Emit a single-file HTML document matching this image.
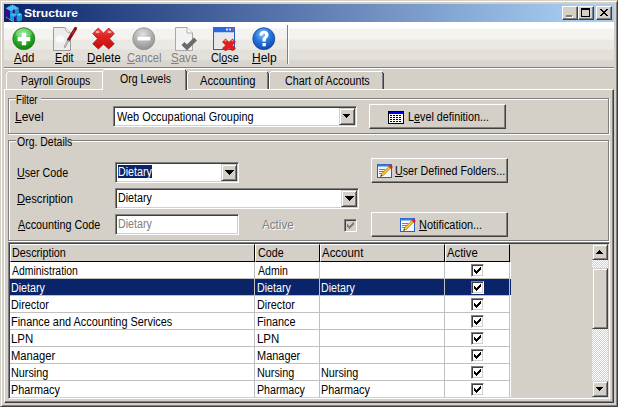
<!DOCTYPE html><html><head><meta charset="utf-8"><style>
*{box-sizing:border-box;margin:0;padding:0}
html,body{width:618px;height:407px;overflow:hidden}
body{position:relative;background:#d4d0c8;font-family:"Liberation Sans",sans-serif;font-size:12px;color:#000}
.a{position:absolute}
.t{position:absolute;white-space:nowrap;line-height:20px;transform-origin:0 0}
u{text-decoration:underline;text-underline-offset:1px;text-decoration-thickness:1px}
.dis{color:#808080;text-shadow:1px 1px 0 #fff}
</style></head><body>
<div class="a" style="left:0px;top:0px;width:618px;height:407px;background:#d4d0c8;border:1px solid;border-color:#d4d0c8 #404040 #404040 #d4d0c8;box-shadow:inset 1px 1px #fff,inset -1px -1px #808080"></div>
<div class="a" style="left:4px;top:4px;width:610px;height:18px;background:linear-gradient(to right,#0a246a 0,#a6caf0 570px);"></div>
<div class="a" style="left:562px;top:6px;width:16px;height:14px;background:#d4d0c8;border:1px solid;border-color:#fff #404040 #404040 #fff;box-shadow:inset -1px -1px #808080"></div>
<div class="a" style="left:578px;top:6px;width:16px;height:14px;background:#d4d0c8;border:1px solid;border-color:#fff #404040 #404040 #fff;box-shadow:inset -1px -1px #808080"></div>
<div class="a" style="left:596px;top:6px;width:16px;height:14px;background:#d4d0c8;border:1px solid;border-color:#fff #404040 #404040 #fff;box-shadow:inset -1px -1px #808080"></div>
<div class="a" style="left:567px;top:16px;width:6px;height:2px;background:#fff;"></div>
<div class="a" style="left:566px;top:15px;width:6px;height:2px;background:#808080;"></div>
<div class="a" style="left:581px;top:8px;width:9px;height:9px;border:1px solid #000;border-top-width:2px"></div>
<svg class="a" style="left:600px;top:9px" width="8" height="7" viewBox="0 0 8 7" shape-rendering="crispEdges"><rect x="0" y="0" width="1" height="1"/><rect x="1" y="0" width="1" height="1"/><rect x="6" y="0" width="1" height="1"/><rect x="7" y="0" width="1" height="1"/><rect x="1" y="1" width="1" height="1"/><rect x="2" y="1" width="1" height="1"/><rect x="5" y="1" width="1" height="1"/><rect x="6" y="1" width="1" height="1"/><rect x="2" y="2" width="1" height="1"/><rect x="3" y="2" width="1" height="1"/><rect x="4" y="2" width="1" height="1"/><rect x="5" y="2" width="1" height="1"/><rect x="3" y="3" width="1" height="1"/><rect x="4" y="3" width="1" height="1"/><rect x="2" y="4" width="1" height="1"/><rect x="3" y="4" width="1" height="1"/><rect x="4" y="4" width="1" height="1"/><rect x="5" y="4" width="1" height="1"/><rect x="1" y="5" width="1" height="1"/><rect x="2" y="5" width="1" height="1"/><rect x="5" y="5" width="1" height="1"/><rect x="6" y="5" width="1" height="1"/><rect x="0" y="6" width="1" height="1"/><rect x="1" y="6" width="1" height="1"/><rect x="6" y="6" width="1" height="1"/><rect x="7" y="6" width="1" height="1"/></svg>
<div class="a" style="left:4px;top:22px;width:610px;height:45px;background:linear-gradient(to bottom,#fff 0,#fff 13%,#f4f3f0 16%,#f4f3f0 38%,#ebe9e4 40%,#ebe9e4 60%,#e3e0da 62%,#e3e0da 84%,#d9d5ce 86%,#d9d5ce 100%);"></div>
<div class="a" style="left:4px;top:67px;width:610px;height:1px;background:#808080;"></div>
<div class="a" style="left:4px;top:68px;width:610px;height:1px;background:#fff;"></div>
<div class="a" style="left:287px;top:25px;width:1px;height:39px;background:#808080;"></div>
<div class="a" style="left:288px;top:25px;width:1px;height:39px;background:#fff;"></div>
<div class="a" style="left:4px;top:89px;width:610px;height:314px;background:#d4d0c8;border:1px solid;border-color:#fff #404040 #404040 #fff;box-shadow:inset -1px -1px #808080"></div>
<div class="a" style="left:6px;top:71px;width:98px;height:18px;background:#d4d0c8;"></div>
<div class="a" style="left:8px;top:71px;width:94px;height:1px;background:#fff;"></div>
<div class="a" style="left:7px;top:72px;width:1px;height:1px;background:#fff;"></div>
<div class="a" style="left:6px;top:73px;width:1px;height:16px;background:#fff;"></div>
<div class="a" style="left:102px;top:72px;width:1px;height:1px;background:#404040;"></div>
<div class="a" style="left:103px;top:73px;width:1px;height:16px;background:#404040;"></div>
<div class="a" style="left:102px;top:73px;width:1px;height:16px;background:#808080;"></div>
<div class="a" style="left:187px;top:71px;width:82px;height:18px;background:#d4d0c8;"></div>
<div class="a" style="left:189px;top:71px;width:78px;height:1px;background:#fff;"></div>
<div class="a" style="left:188px;top:72px;width:1px;height:1px;background:#fff;"></div>
<div class="a" style="left:187px;top:73px;width:1px;height:16px;background:#fff;"></div>
<div class="a" style="left:267px;top:72px;width:1px;height:1px;background:#404040;"></div>
<div class="a" style="left:268px;top:73px;width:1px;height:16px;background:#404040;"></div>
<div class="a" style="left:267px;top:73px;width:1px;height:16px;background:#808080;"></div>
<div class="a" style="left:269px;top:71px;width:115px;height:18px;background:#d4d0c8;"></div>
<div class="a" style="left:271px;top:71px;width:111px;height:1px;background:#fff;"></div>
<div class="a" style="left:270px;top:72px;width:1px;height:1px;background:#fff;"></div>
<div class="a" style="left:269px;top:73px;width:1px;height:16px;background:#fff;"></div>
<div class="a" style="left:382px;top:72px;width:1px;height:1px;background:#404040;"></div>
<div class="a" style="left:383px;top:73px;width:1px;height:16px;background:#404040;"></div>
<div class="a" style="left:382px;top:73px;width:1px;height:16px;background:#808080;"></div>
<div class="a" style="left:102px;top:69px;width:85px;height:21px;background:#d4d0c8;"></div>
<div class="a" style="left:104px;top:69px;width:81px;height:1px;background:#fff;"></div>
<div class="a" style="left:103px;top:70px;width:1px;height:1px;background:#fff;"></div>
<div class="a" style="left:102px;top:71px;width:1px;height:19px;background:#fff;"></div>
<div class="a" style="left:185px;top:70px;width:1px;height:1px;background:#404040;"></div>
<div class="a" style="left:186px;top:71px;width:1px;height:19px;background:#404040;"></div>
<div class="a" style="left:185px;top:71px;width:1px;height:19px;background:#808080;"></div>
<div class="a" style="left:8px;top:98px;width:601px;height:36px;border:1px solid #808080;box-shadow:1px 1px #fff,inset 1px 1px #fff"></div>
<div class="a" style="left:16px;top:96px;width:25px;height:5px;background:#d4d0c8;"></div>
<div class="a" style="left:113px;top:106px;width:244px;height:21px;background:#fff;border:1px solid;border-color:#808080 #fff #fff #808080;box-shadow:inset 1px 1px #404040,inset -1px -1px #d4d0c8"></div>
<div class="a" style="left:339px;top:108px;width:16px;height:17px;background:#d4d0c8;border:1px solid;border-color:#d4d0c8 #404040 #404040 #d4d0c8;box-shadow:inset 1px 1px #fff,inset -1px -1px #808080"></div>
<svg class="a" style="left:343px;top:114px" width="7" height="4" viewBox="0 0 7 4" shape-rendering="crispEdges"><rect x="0" y="0" width="7" height="1"/><rect x="1" y="1" width="5" height="1"/><rect x="2" y="2" width="3" height="1"/><rect x="3" y="3" width="1" height="1"/></svg>
<div class="a" style="left:369px;top:104px;width:137px;height:25px;background:#d4d0c8;border:1px solid;border-color:#fff #404040 #404040 #fff;box-shadow:inset -1px -1px #808080"></div>
<div class="a" style="left:8px;top:140px;width:601px;height:101px;border:1px solid #808080;box-shadow:1px 1px #fff,inset 1px 1px #fff"></div>
<div class="a" style="left:16px;top:138px;width:56px;height:5px;background:#d4d0c8;"></div>
<div class="a" style="left:115px;top:162px;width:124px;height:21px;background:#fff;border:1px solid;border-color:#808080 #fff #fff #808080;box-shadow:inset 1px 1px #404040,inset -1px -1px #d4d0c8"></div>
<div class="a" style="left:118px;top:165px;width:34px;height:13px;background:#0a246a;"></div>
<div class="a" style="left:221px;top:164px;width:16px;height:17px;background:#d4d0c8;border:1px solid;border-color:#d4d0c8 #404040 #404040 #d4d0c8;box-shadow:inset 1px 1px #fff,inset -1px -1px #808080"></div>
<svg class="a" style="left:225px;top:170px" width="9" height="5" viewBox="0 0 9 5" shape-rendering="crispEdges"><rect x="0" y="0" width="9" height="1"/><rect x="1" y="1" width="7" height="1"/><rect x="2" y="2" width="5" height="1"/><rect x="3" y="3" width="3" height="1"/><rect x="4" y="4" width="1" height="1"/></svg>
<div class="a" style="left:115px;top:188px;width:244px;height:21px;background:#fff;border:1px solid;border-color:#808080 #fff #fff #808080;box-shadow:inset 1px 1px #404040,inset -1px -1px #d4d0c8"></div>
<div class="a" style="left:341px;top:190px;width:16px;height:17px;background:#d4d0c8;border:1px solid;border-color:#d4d0c8 #404040 #404040 #d4d0c8;box-shadow:inset 1px 1px #fff,inset -1px -1px #808080"></div>
<svg class="a" style="left:345px;top:196px" width="9" height="5" viewBox="0 0 9 5" shape-rendering="crispEdges"><rect x="0" y="0" width="9" height="1"/><rect x="1" y="1" width="7" height="1"/><rect x="2" y="2" width="5" height="1"/><rect x="3" y="3" width="3" height="1"/><rect x="4" y="4" width="1" height="1"/></svg>
<div class="a" style="left:115px;top:214px;width:124px;height:21px;background:#fff;border:1px solid;border-color:#808080 #fff #fff #808080;box-shadow:inset 1px 1px #404040,inset -1px -1px #d4d0c8"></div>
<div class="a" style="left:344px;top:219px;width:13px;height:13px;background:#d4d0c8;border:1px solid;border-color:#808080 #fff #fff #808080;box-shadow:inset 1px 1px #404040,inset -1px -1px #d4d0c8"></div>
<div class="a" style="left:371px;top:158px;width:137px;height:25px;background:#d4d0c8;border:1px solid;border-color:#fff #404040 #404040 #fff;box-shadow:inset -1px -1px #808080"></div>
<div class="a" style="left:371px;top:212px;width:137px;height:25px;background:#d4d0c8;border:1px solid;border-color:#fff #404040 #404040 #fff;box-shadow:inset -1px -1px #808080"></div>
<div class="a" style="left:8px;top:242px;width:602px;height:157px;background:#d4d0c8;border:1px solid;border-color:#808080 #fff #fff #808080;box-shadow:inset 1px 1px #404040,inset -1px -1px #d4d0c8"></div>
<div class="a" style="left:10px;top:244px;width:245px;height:18px;background:#d4d0c8;border:1px solid;border-color:#fff #000 #000 #fff;box-shadow:none"></div>
<div class="a" style="left:255px;top:244px;width:65px;height:18px;background:#d4d0c8;border:1px solid;border-color:#fff #000 #000 #fff;box-shadow:none"></div>
<div class="a" style="left:320px;top:244px;width:125px;height:18px;background:#d4d0c8;border:1px solid;border-color:#fff #000 #000 #fff;box-shadow:none"></div>
<div class="a" style="left:445px;top:244px;width:65px;height:18px;background:#d4d0c8;border:1px solid;border-color:#fff #000 #000 #fff;box-shadow:none"></div>
<div class="a" style="left:10px;top:262px;width:501px;height:17px;background:#fff;"></div>
<div class="a" style="left:10px;top:279px;width:501px;height:17px;background:#fff;"></div>
<div class="a" style="left:10px;top:296px;width:501px;height:17px;background:#fff;"></div>
<div class="a" style="left:10px;top:313px;width:501px;height:17px;background:#fff;"></div>
<div class="a" style="left:10px;top:330px;width:501px;height:17px;background:#fff;"></div>
<div class="a" style="left:10px;top:347px;width:501px;height:17px;background:#fff;"></div>
<div class="a" style="left:10px;top:364px;width:501px;height:17px;background:#fff;"></div>
<div class="a" style="left:10px;top:381px;width:501px;height:16px;background:#fff;"></div>
<div class="a" style="left:10px;top:278px;width:500px;height:1px;background:#c0c0c0;"></div>
<div class="a" style="left:10px;top:295px;width:500px;height:1px;background:#c0c0c0;"></div>
<div class="a" style="left:10px;top:312px;width:500px;height:1px;background:#c0c0c0;"></div>
<div class="a" style="left:10px;top:329px;width:500px;height:1px;background:#c0c0c0;"></div>
<div class="a" style="left:10px;top:346px;width:500px;height:1px;background:#c0c0c0;"></div>
<div class="a" style="left:10px;top:363px;width:500px;height:1px;background:#c0c0c0;"></div>
<div class="a" style="left:10px;top:380px;width:500px;height:1px;background:#c0c0c0;"></div>
<div class="a" style="left:254px;top:262px;width:1px;height:135px;background:#c0c0c0;"></div>
<div class="a" style="left:319px;top:262px;width:1px;height:135px;background:#c0c0c0;"></div>
<div class="a" style="left:444px;top:262px;width:1px;height:135px;background:#c0c0c0;"></div>
<div class="a" style="left:509px;top:262px;width:1px;height:135px;background:#c0c0c0;"></div>
<div class="a" style="left:10px;top:279px;width:501px;height:16px;background:#0a246a;"></div>
<div class="a" style="left:254px;top:279px;width:1px;height:16px;background:#c0c0c0;"></div>
<div class="a" style="left:319px;top:279px;width:1px;height:16px;background:#c0c0c0;"></div>
<div class="a" style="left:444px;top:279px;width:1px;height:16px;background:#c0c0c0;"></div>
<div class="a" style="left:509px;top:279px;width:1px;height:16px;background:#c0c0c0;"></div>
<div class="a" style="left:471px;top:264px;width:13px;height:13px;background:#fff;border:1px solid;border-color:#808080 #fff #fff #808080;box-shadow:inset 1px 1px #404040,inset -1px -1px #d4d0c8"></div>
<div class="a" style="left:471px;top:281px;width:13px;height:13px;background:#fff;border:1px solid;border-color:#808080 #fff #fff #808080;box-shadow:inset 1px 1px #404040,inset -1px -1px #d4d0c8"></div>
<div class="a" style="left:471px;top:298px;width:13px;height:13px;background:#fff;border:1px solid;border-color:#808080 #fff #fff #808080;box-shadow:inset 1px 1px #404040,inset -1px -1px #d4d0c8"></div>
<div class="a" style="left:471px;top:315px;width:13px;height:13px;background:#fff;border:1px solid;border-color:#808080 #fff #fff #808080;box-shadow:inset 1px 1px #404040,inset -1px -1px #d4d0c8"></div>
<div class="a" style="left:471px;top:332px;width:13px;height:13px;background:#fff;border:1px solid;border-color:#808080 #fff #fff #808080;box-shadow:inset 1px 1px #404040,inset -1px -1px #d4d0c8"></div>
<div class="a" style="left:471px;top:349px;width:13px;height:13px;background:#fff;border:1px solid;border-color:#808080 #fff #fff #808080;box-shadow:inset 1px 1px #404040,inset -1px -1px #d4d0c8"></div>
<div class="a" style="left:471px;top:366px;width:13px;height:13px;background:#fff;border:1px solid;border-color:#808080 #fff #fff #808080;box-shadow:inset 1px 1px #404040,inset -1px -1px #d4d0c8"></div>
<div class="a" style="left:471px;top:383px;width:13px;height:13px;background:#fff;border:1px solid;border-color:#808080 #fff #fff #808080;box-shadow:inset 1px 1px #404040,inset -1px -1px #d4d0c8"></div>
<div class="a" style="left:592px;top:260px;width:16px;height:121px;background-color:#fff;background-image:linear-gradient(45deg,#d4d0c8 25%,transparent 25%,transparent 75%,#d4d0c8 75%),linear-gradient(45deg,#d4d0c8 25%,transparent 25%,transparent 75%,#d4d0c8 75%);background-size:2px 2px;background-position:0 0,1px 1px"></div>
<div class="a" style="left:592px;top:244px;width:16px;height:16px;background:#d4d0c8;border:1px solid;border-color:#d4d0c8 #404040 #404040 #d4d0c8;box-shadow:inset 1px 1px #fff,inset -1px -1px #808080"></div>
<svg class="a" style="left:596px;top:250px" width="7" height="4" viewBox="0 0 7 4" shape-rendering="crispEdges"><rect x="3" y="0" width="1" height="1"/><rect x="2" y="1" width="3" height="1"/><rect x="1" y="2" width="5" height="1"/><rect x="0" y="3" width="7" height="1"/></svg>
<div class="a" style="left:592px;top:268px;width:16px;height:61px;background:#d4d0c8;border:1px solid;border-color:#d4d0c8 #404040 #404040 #d4d0c8;box-shadow:inset 1px 1px #fff,inset -1px -1px #808080"></div>
<div class="a" style="left:592px;top:381px;width:16px;height:16px;background:#d4d0c8;border:1px solid;border-color:#d4d0c8 #404040 #404040 #d4d0c8;box-shadow:inset 1px 1px #fff,inset -1px -1px #808080"></div>
<svg class="a" style="left:596px;top:387px" width="7" height="4" viewBox="0 0 7 4" shape-rendering="crispEdges"><rect x="0" y="0" width="7" height="1"/><rect x="1" y="1" width="5" height="1"/><rect x="2" y="2" width="3" height="1"/><rect x="3" y="3" width="1" height="1"/></svg>
<svg class="a" style="left:4px;top:4px" width="18" height="18" viewBox="0 0 18 18" ><polygon points="2,4.5 2,13 6,15 6,6.5" fill="#3c0890"/><polygon points="2,4.5 8.4,1 14.8,4.5 8.4,8" fill="#40c4f4"/><polygon points="6,6.5 8.4,8 14.8,4.5 14.8,9 12.5,10 12.5,16.5 9,18 6,16" fill="#1c98d8"/><polygon points="8.6,6.2 10.8,5 10.8,10 8.6,11.2" fill="#3c0890"/><polygon points="6,10.5 9,9 12.5,10.5 9,12.5" fill="#38bcf0"/><polygon points="12.5,10.5 15.5,9 18,10.5 18,16 15,17.8 12.5,16.5" fill="#1c98d8"/><polygon points="12.5,10.5 15.5,9 18,10.5 15,12" fill="#48cafa"/><polygon points="10,13 12.5,12 12.5,16.5 10,17.5" fill="#3c0890"/><path d="M2,13 L8,17" stroke="#d8d0a0" stroke-width="1" stroke-dasharray="1,1"/><path d="M2.5,4 L8.4,1 L14.5,4" stroke="#b8ecff" stroke-width="0.8" fill="none" stroke-dasharray="1,1"/></svg>
<svg class="a" style="left:12px;top:27px" width="24" height="24" viewBox="0 0 24 24" ><defs><radialGradient id="gAdd" cx="0.45" cy="0.3" r="0.75"><stop offset="0" stop-color="#8ee88e"/><stop offset="0.45" stop-color="#2fb82f"/><stop offset="1" stop-color="#087808"/></radialGradient></defs><circle cx="11.8" cy="11.7" r="11" fill="url(#gAdd)" stroke="#2f7a2f" stroke-width="0.8"/><ellipse cx="11.8" cy="6.5" rx="8" ry="5" fill="#fff" opacity="0.25"/><rect x="5.6" y="10" width="12.6" height="4.2" fill="#fff"/><rect x="9.8" y="5.8" width="4.4" height="12.4" fill="#fff"/></svg>
<svg class="a" style="left:52px;top:27px" width="26" height="24" viewBox="0 0 26 24" ><path d="M1.5,0.5 H13 L18.5,6 V23.5 H1.5 Z" fill="#ececec" stroke="#9a9a9a"/><path d="M13,0.5 Q13.5,5.5 18.5,6" fill="#fafafa" stroke="#a8a8a8"/><ellipse cx="8" cy="12" rx="4.5" ry="3.5" fill="#fafafa"/><path d="M23.5,1.5 L16.5,13" stroke="#8a1010" stroke-width="3.2" stroke-linecap="round"/><path d="M22.5,3 L20,7" stroke="#c04040" stroke-width="1"/><path d="M16.5,13 L12.5,20.5" stroke="#909090" stroke-width="2"/><path d="M16,14 L13,19.5" stroke="#e0e0e0" stroke-width="0.8"/></svg>
<svg class="a" style="left:92px;top:27px" width="24" height="24" viewBox="0 0 24 24" ><defs><linearGradient id="gDel" x1="0" y1="0" x2="0" y2="1"><stop offset="0" stop-color="#f05a5a"/><stop offset="0.35" stop-color="#e42424"/><stop offset="1" stop-color="#c40c0c"/></linearGradient></defs><path d="M6.3,1 L11.5,6.2 L16.7,1 L22.2,6.6 L17.4,11.7 L22.2,16.8 L16.7,22 L11.5,17.2 L6.3,22 L0.8,16.8 L5.6,11.7 L0.8,6.6 Z" fill="url(#gDel)" stroke="#a81010" stroke-width="0.8" stroke-linejoin="round"/><ellipse cx="5.5" cy="5" rx="2" ry="1.1" fill="#ffd0c0" opacity="0.85"/><ellipse cx="17.5" cy="5" rx="2" ry="1.1" fill="#ffd0c0" opacity="0.85"/></svg>
<svg class="a" style="left:132px;top:27px" width="24" height="24" viewBox="0 0 24 24" ><defs><radialGradient id="gCan" cx="0.45" cy="0.3" r="0.75"><stop offset="0" stop-color="#e0e0e0"/><stop offset="0.5" stop-color="#b4b4b4"/><stop offset="1" stop-color="#8c8c8c"/></radialGradient></defs><circle cx="11.8" cy="11.7" r="11" fill="url(#gCan)" stroke="#909090" stroke-width="0.8"/><rect x="5.6" y="9.8" width="12.6" height="3.6" fill="#fff"/></svg>
<svg class="a" style="left:172px;top:27px" width="26" height="24" viewBox="0 0 26 24" ><path d="M3.5,0.5 H15 L20.5,6 V23.5 H3.5 Z" fill="#f2f2f2" stroke="#a8a8a8"/><path d="M15,0.5 V6 H20.5" fill="#fafafa" stroke="#b0b0b0"/><path d="M11,16.5 L15,20.5 L23.5,12" fill="none" stroke="#6a6a6a" stroke-width="4.2"/></svg>
<svg class="a" style="left:212px;top:27px" width="24" height="24" viewBox="0 0 24 24" ><rect x="1.5" y="0.5" width="21" height="22" fill="#f0f0f0" stroke="#2a5cc0"/><rect x="1" y="0" width="22" height="5.5" fill="#2a6ae0"/><rect x="2" y="5.5" width="20" height="16" fill="#e8e8e8"/><rect x="14" y="1.5" width="2" height="2" fill="#d0e0ff"/><rect x="17" y="1.5" width="2" height="2" fill="#d0e0ff"/><rect x="20" y="1.5" width="2" height="2" fill="#f04040"/><path d="M13.5,12 L17,15.2 L20.5,12 L23.5,15 L20.3,18.2 L23.5,21.2 L20.5,24 L17,21 L13.5,24 L10.5,21.2 L13.7,18.2 L10.5,15 Z" fill="#e41c1c" stroke="#b01010" stroke-width="0.6"/><ellipse cx="13.5" cy="13.8" rx="1.2" ry="0.8" fill="#ff9090"/><ellipse cx="20.5" cy="13.8" rx="1.2" ry="0.8" fill="#ff9090"/></svg>
<svg class="a" style="left:252px;top:27px" width="24" height="24" viewBox="0 0 24 24" ><defs><radialGradient id="gHelp" cx="0.45" cy="0.3" r="0.75"><stop offset="0" stop-color="#8cc4ff"/><stop offset="0.45" stop-color="#2a7ae0"/><stop offset="1" stop-color="#0a40a8"/></radialGradient></defs><circle cx="11.8" cy="11.7" r="11" fill="url(#gHelp)" stroke="#1a4a9a" stroke-width="0.8"/><path d="M7.5,8.5 C7.5,5 10,3.8 12,3.8 C14.5,3.8 16.5,5.3 16.5,8 C16.5,10.5 13.8,11 13.8,13.5 V14.5 H10.5 V13 C10.5,10 13.2,9.5 13.2,8 C13.2,7 12.6,6.5 12,6.5 C11.2,6.5 10.8,7.2 10.8,8.5 Z" fill="#fff"/><rect x="10.5" y="16" width="3.3" height="3.3" fill="#fff"/></svg>
<svg class="a" style="left:388px;top:111px" width="16" height="13" viewBox="0 0 16 13" shape-rendering="crispEdges"><rect x="0.5" y="0.5" width="15" height="12" fill="#fff" stroke="#000"/><rect x="1" y="1" width="14" height="2" fill="#0000f0"/><rect x="2" y="4" width="2" height="1" fill="#000"/><rect x="5" y="4" width="2" height="1" fill="#000"/><rect x="8" y="4" width="2" height="1" fill="#000"/><rect x="11" y="4" width="2" height="1" fill="#000"/><rect x="2" y="6" width="2" height="1" fill="#000"/><rect x="5" y="6" width="2" height="1" fill="#000"/><rect x="8" y="6" width="2" height="1" fill="#000"/><rect x="11" y="6" width="2" height="1" fill="#000"/><rect x="2" y="8" width="2" height="1" fill="#000"/><rect x="5" y="8" width="2" height="1" fill="#000"/><rect x="8" y="8" width="2" height="1" fill="#000"/><rect x="11" y="8" width="2" height="1" fill="#000"/><rect x="2" y="10" width="2" height="1" fill="#000"/><rect x="5" y="10" width="2" height="1" fill="#000"/><rect x="8" y="10" width="2" height="1" fill="#000"/><rect x="11" y="10" width="2" height="1" fill="#000"/></svg>
<svg class="a" style="left:377px;top:164px" width="16" height="14" viewBox="0 0 16 14" ><rect x="0.5" y="0.5" width="14" height="13" fill="#f4f8ff" stroke="#2a5cc8"/><rect x="0.5" y="0.5" width="14" height="2" fill="#3a78e0"/><rect x="2" y="5" width="6" height="1" fill="#4a88e0"/><rect x="2" y="7" width="5" height="1" fill="#4a88e0"/><rect x="2" y="9" width="4" height="1" fill="#4a88e0"/><path d="M5,11 L13.5,2.5" stroke="#c08000" stroke-width="3"/><path d="M5,11 L13.5,2.5" stroke="#ffd040" stroke-width="1.5"/><path d="M12.5,1.5 L15,4" stroke="#e02020" stroke-width="2.5"/><path d="M3.5,12.5 L5,11" stroke="#303030" stroke-width="1.2"/></svg>
<svg class="a" style="left:400px;top:218px" width="16" height="14" viewBox="0 0 16 14" ><rect x="0.5" y="0.5" width="14" height="13" fill="#f4f8ff" stroke="#2a5cc8"/><rect x="0.5" y="0.5" width="14" height="2" fill="#3a78e0"/><rect x="2" y="5" width="6" height="1" fill="#4a88e0"/><rect x="2" y="7" width="5" height="1" fill="#4a88e0"/><rect x="2" y="9" width="4" height="1" fill="#4a88e0"/><path d="M5,11 L13.5,2.5" stroke="#c08000" stroke-width="3"/><path d="M5,11 L13.5,2.5" stroke="#ffd040" stroke-width="1.5"/><path d="M12.5,1.5 L15,4" stroke="#e02020" stroke-width="2.5"/><path d="M3.5,12.5 L5,11" stroke="#303030" stroke-width="1.2"/></svg>
<svg class="a" style="left:474px;top:267px" width="7" height="7" viewBox="0 0 7 7" shape-rendering="crispEdges"><rect x="6" y="0" width="1" height="1" fill="#000"/><rect x="5" y="1" width="1" height="1" fill="#000"/><rect x="6" y="1" width="1" height="1" fill="#000"/><rect x="0" y="2" width="1" height="1" fill="#000"/><rect x="4" y="2" width="1" height="1" fill="#000"/><rect x="5" y="2" width="1" height="1" fill="#000"/><rect x="6" y="2" width="1" height="1" fill="#000"/><rect x="0" y="3" width="1" height="1" fill="#000"/><rect x="1" y="3" width="1" height="1" fill="#000"/><rect x="3" y="3" width="1" height="1" fill="#000"/><rect x="4" y="3" width="1" height="1" fill="#000"/><rect x="5" y="3" width="1" height="1" fill="#000"/><rect x="0" y="4" width="1" height="1" fill="#000"/><rect x="1" y="4" width="1" height="1" fill="#000"/><rect x="2" y="4" width="1" height="1" fill="#000"/><rect x="3" y="4" width="1" height="1" fill="#000"/><rect x="4" y="4" width="1" height="1" fill="#000"/><rect x="1" y="5" width="1" height="1" fill="#000"/><rect x="2" y="5" width="1" height="1" fill="#000"/><rect x="3" y="5" width="1" height="1" fill="#000"/><rect x="2" y="6" width="1" height="1" fill="#000"/></svg>
<svg class="a" style="left:474px;top:284px" width="7" height="7" viewBox="0 0 7 7" shape-rendering="crispEdges"><rect x="6" y="0" width="1" height="1" fill="#000"/><rect x="5" y="1" width="1" height="1" fill="#000"/><rect x="6" y="1" width="1" height="1" fill="#000"/><rect x="0" y="2" width="1" height="1" fill="#000"/><rect x="4" y="2" width="1" height="1" fill="#000"/><rect x="5" y="2" width="1" height="1" fill="#000"/><rect x="6" y="2" width="1" height="1" fill="#000"/><rect x="0" y="3" width="1" height="1" fill="#000"/><rect x="1" y="3" width="1" height="1" fill="#000"/><rect x="3" y="3" width="1" height="1" fill="#000"/><rect x="4" y="3" width="1" height="1" fill="#000"/><rect x="5" y="3" width="1" height="1" fill="#000"/><rect x="0" y="4" width="1" height="1" fill="#000"/><rect x="1" y="4" width="1" height="1" fill="#000"/><rect x="2" y="4" width="1" height="1" fill="#000"/><rect x="3" y="4" width="1" height="1" fill="#000"/><rect x="4" y="4" width="1" height="1" fill="#000"/><rect x="1" y="5" width="1" height="1" fill="#000"/><rect x="2" y="5" width="1" height="1" fill="#000"/><rect x="3" y="5" width="1" height="1" fill="#000"/><rect x="2" y="6" width="1" height="1" fill="#000"/></svg>
<svg class="a" style="left:474px;top:301px" width="7" height="7" viewBox="0 0 7 7" shape-rendering="crispEdges"><rect x="6" y="0" width="1" height="1" fill="#000"/><rect x="5" y="1" width="1" height="1" fill="#000"/><rect x="6" y="1" width="1" height="1" fill="#000"/><rect x="0" y="2" width="1" height="1" fill="#000"/><rect x="4" y="2" width="1" height="1" fill="#000"/><rect x="5" y="2" width="1" height="1" fill="#000"/><rect x="6" y="2" width="1" height="1" fill="#000"/><rect x="0" y="3" width="1" height="1" fill="#000"/><rect x="1" y="3" width="1" height="1" fill="#000"/><rect x="3" y="3" width="1" height="1" fill="#000"/><rect x="4" y="3" width="1" height="1" fill="#000"/><rect x="5" y="3" width="1" height="1" fill="#000"/><rect x="0" y="4" width="1" height="1" fill="#000"/><rect x="1" y="4" width="1" height="1" fill="#000"/><rect x="2" y="4" width="1" height="1" fill="#000"/><rect x="3" y="4" width="1" height="1" fill="#000"/><rect x="4" y="4" width="1" height="1" fill="#000"/><rect x="1" y="5" width="1" height="1" fill="#000"/><rect x="2" y="5" width="1" height="1" fill="#000"/><rect x="3" y="5" width="1" height="1" fill="#000"/><rect x="2" y="6" width="1" height="1" fill="#000"/></svg>
<svg class="a" style="left:474px;top:318px" width="7" height="7" viewBox="0 0 7 7" shape-rendering="crispEdges"><rect x="6" y="0" width="1" height="1" fill="#000"/><rect x="5" y="1" width="1" height="1" fill="#000"/><rect x="6" y="1" width="1" height="1" fill="#000"/><rect x="0" y="2" width="1" height="1" fill="#000"/><rect x="4" y="2" width="1" height="1" fill="#000"/><rect x="5" y="2" width="1" height="1" fill="#000"/><rect x="6" y="2" width="1" height="1" fill="#000"/><rect x="0" y="3" width="1" height="1" fill="#000"/><rect x="1" y="3" width="1" height="1" fill="#000"/><rect x="3" y="3" width="1" height="1" fill="#000"/><rect x="4" y="3" width="1" height="1" fill="#000"/><rect x="5" y="3" width="1" height="1" fill="#000"/><rect x="0" y="4" width="1" height="1" fill="#000"/><rect x="1" y="4" width="1" height="1" fill="#000"/><rect x="2" y="4" width="1" height="1" fill="#000"/><rect x="3" y="4" width="1" height="1" fill="#000"/><rect x="4" y="4" width="1" height="1" fill="#000"/><rect x="1" y="5" width="1" height="1" fill="#000"/><rect x="2" y="5" width="1" height="1" fill="#000"/><rect x="3" y="5" width="1" height="1" fill="#000"/><rect x="2" y="6" width="1" height="1" fill="#000"/></svg>
<svg class="a" style="left:474px;top:335px" width="7" height="7" viewBox="0 0 7 7" shape-rendering="crispEdges"><rect x="6" y="0" width="1" height="1" fill="#000"/><rect x="5" y="1" width="1" height="1" fill="#000"/><rect x="6" y="1" width="1" height="1" fill="#000"/><rect x="0" y="2" width="1" height="1" fill="#000"/><rect x="4" y="2" width="1" height="1" fill="#000"/><rect x="5" y="2" width="1" height="1" fill="#000"/><rect x="6" y="2" width="1" height="1" fill="#000"/><rect x="0" y="3" width="1" height="1" fill="#000"/><rect x="1" y="3" width="1" height="1" fill="#000"/><rect x="3" y="3" width="1" height="1" fill="#000"/><rect x="4" y="3" width="1" height="1" fill="#000"/><rect x="5" y="3" width="1" height="1" fill="#000"/><rect x="0" y="4" width="1" height="1" fill="#000"/><rect x="1" y="4" width="1" height="1" fill="#000"/><rect x="2" y="4" width="1" height="1" fill="#000"/><rect x="3" y="4" width="1" height="1" fill="#000"/><rect x="4" y="4" width="1" height="1" fill="#000"/><rect x="1" y="5" width="1" height="1" fill="#000"/><rect x="2" y="5" width="1" height="1" fill="#000"/><rect x="3" y="5" width="1" height="1" fill="#000"/><rect x="2" y="6" width="1" height="1" fill="#000"/></svg>
<svg class="a" style="left:474px;top:352px" width="7" height="7" viewBox="0 0 7 7" shape-rendering="crispEdges"><rect x="6" y="0" width="1" height="1" fill="#000"/><rect x="5" y="1" width="1" height="1" fill="#000"/><rect x="6" y="1" width="1" height="1" fill="#000"/><rect x="0" y="2" width="1" height="1" fill="#000"/><rect x="4" y="2" width="1" height="1" fill="#000"/><rect x="5" y="2" width="1" height="1" fill="#000"/><rect x="6" y="2" width="1" height="1" fill="#000"/><rect x="0" y="3" width="1" height="1" fill="#000"/><rect x="1" y="3" width="1" height="1" fill="#000"/><rect x="3" y="3" width="1" height="1" fill="#000"/><rect x="4" y="3" width="1" height="1" fill="#000"/><rect x="5" y="3" width="1" height="1" fill="#000"/><rect x="0" y="4" width="1" height="1" fill="#000"/><rect x="1" y="4" width="1" height="1" fill="#000"/><rect x="2" y="4" width="1" height="1" fill="#000"/><rect x="3" y="4" width="1" height="1" fill="#000"/><rect x="4" y="4" width="1" height="1" fill="#000"/><rect x="1" y="5" width="1" height="1" fill="#000"/><rect x="2" y="5" width="1" height="1" fill="#000"/><rect x="3" y="5" width="1" height="1" fill="#000"/><rect x="2" y="6" width="1" height="1" fill="#000"/></svg>
<svg class="a" style="left:474px;top:369px" width="7" height="7" viewBox="0 0 7 7" shape-rendering="crispEdges"><rect x="6" y="0" width="1" height="1" fill="#000"/><rect x="5" y="1" width="1" height="1" fill="#000"/><rect x="6" y="1" width="1" height="1" fill="#000"/><rect x="0" y="2" width="1" height="1" fill="#000"/><rect x="4" y="2" width="1" height="1" fill="#000"/><rect x="5" y="2" width="1" height="1" fill="#000"/><rect x="6" y="2" width="1" height="1" fill="#000"/><rect x="0" y="3" width="1" height="1" fill="#000"/><rect x="1" y="3" width="1" height="1" fill="#000"/><rect x="3" y="3" width="1" height="1" fill="#000"/><rect x="4" y="3" width="1" height="1" fill="#000"/><rect x="5" y="3" width="1" height="1" fill="#000"/><rect x="0" y="4" width="1" height="1" fill="#000"/><rect x="1" y="4" width="1" height="1" fill="#000"/><rect x="2" y="4" width="1" height="1" fill="#000"/><rect x="3" y="4" width="1" height="1" fill="#000"/><rect x="4" y="4" width="1" height="1" fill="#000"/><rect x="1" y="5" width="1" height="1" fill="#000"/><rect x="2" y="5" width="1" height="1" fill="#000"/><rect x="3" y="5" width="1" height="1" fill="#000"/><rect x="2" y="6" width="1" height="1" fill="#000"/></svg>
<svg class="a" style="left:474px;top:386px" width="7" height="7" viewBox="0 0 7 7" shape-rendering="crispEdges"><rect x="6" y="0" width="1" height="1" fill="#000"/><rect x="5" y="1" width="1" height="1" fill="#000"/><rect x="6" y="1" width="1" height="1" fill="#000"/><rect x="0" y="2" width="1" height="1" fill="#000"/><rect x="4" y="2" width="1" height="1" fill="#000"/><rect x="5" y="2" width="1" height="1" fill="#000"/><rect x="6" y="2" width="1" height="1" fill="#000"/><rect x="0" y="3" width="1" height="1" fill="#000"/><rect x="1" y="3" width="1" height="1" fill="#000"/><rect x="3" y="3" width="1" height="1" fill="#000"/><rect x="4" y="3" width="1" height="1" fill="#000"/><rect x="5" y="3" width="1" height="1" fill="#000"/><rect x="0" y="4" width="1" height="1" fill="#000"/><rect x="1" y="4" width="1" height="1" fill="#000"/><rect x="2" y="4" width="1" height="1" fill="#000"/><rect x="3" y="4" width="1" height="1" fill="#000"/><rect x="4" y="4" width="1" height="1" fill="#000"/><rect x="1" y="5" width="1" height="1" fill="#000"/><rect x="2" y="5" width="1" height="1" fill="#000"/><rect x="3" y="5" width="1" height="1" fill="#000"/><rect x="2" y="6" width="1" height="1" fill="#000"/></svg>
<svg class="a" style="left:347px;top:222px" width="7" height="7" viewBox="0 0 7 7" shape-rendering="crispEdges"><rect x="6" y="0" width="1" height="1" fill="#808080"/><rect x="5" y="1" width="1" height="1" fill="#808080"/><rect x="6" y="1" width="1" height="1" fill="#808080"/><rect x="0" y="2" width="1" height="1" fill="#808080"/><rect x="4" y="2" width="1" height="1" fill="#808080"/><rect x="5" y="2" width="1" height="1" fill="#808080"/><rect x="6" y="2" width="1" height="1" fill="#808080"/><rect x="0" y="3" width="1" height="1" fill="#808080"/><rect x="1" y="3" width="1" height="1" fill="#808080"/><rect x="3" y="3" width="1" height="1" fill="#808080"/><rect x="4" y="3" width="1" height="1" fill="#808080"/><rect x="5" y="3" width="1" height="1" fill="#808080"/><rect x="0" y="4" width="1" height="1" fill="#808080"/><rect x="1" y="4" width="1" height="1" fill="#808080"/><rect x="2" y="4" width="1" height="1" fill="#808080"/><rect x="3" y="4" width="1" height="1" fill="#808080"/><rect x="4" y="4" width="1" height="1" fill="#808080"/><rect x="1" y="5" width="1" height="1" fill="#808080"/><rect x="2" y="5" width="1" height="1" fill="#808080"/><rect x="3" y="5" width="1" height="1" fill="#808080"/><rect x="2" y="6" width="1" height="1" fill="#808080"/></svg>
<div class="t" style="left:24.00px;top:3px;font-size:11px;transform:scaleX(1.1020);font-weight:bold;color:#fff;">Structure</div>
<div class="t" style="left:14.00px;top:48px;font-size:12px;transform:scaleX(0.9524);color:#000;"><u>A</u>dd</div>
<div class="t" style="left:55.10px;top:48px;font-size:12px;transform:scaleX(0.9000);color:#000;"><u>E</u>dit</div>
<div class="t" style="left:87.03px;top:48px;font-size:12px;transform:scaleX(0.9697);color:#000;"><u>D</u>elete</div>
<div class="t" style="left:127.00px;top:48px;font-size:12px;transform:scaleX(0.9189);color:#808080;"><u>C</u>ancel</div>
<div class="t" style="left:171.04px;top:48px;font-size:12px;transform:scaleX(0.9615);color:#808080;"><u>S</u>ave</div>
<div class="t" style="left:211.00px;top:48px;font-size:12px;transform:scaleX(0.9000);color:#000;">Cl<u>o</u>se</div>
<div class="t" style="left:252.00px;top:48px;font-size:12px;transform:scaleX(1.0000);color:#000;"><u>H</u>elp</div>
<div class="t" style="left:21.13px;top:71px;font-size:12px;transform:scaleX(0.8718);color:#000;">Payroll Groups</div>
<div class="t" style="left:120.00px;top:69px;font-size:12px;transform:scaleX(0.8793);color:#000;">Org Levels</div>
<div class="t" style="left:200.00px;top:71px;font-size:12px;transform:scaleX(0.9322);color:#000;">Accounting</div>
<div class="t" style="left:285.00px;top:71px;font-size:12px;transform:scaleX(0.8947);color:#000;">Chart of Accounts</div>
<div class="t" style="left:15.00px;top:107px;font-size:12px;transform:scaleX(1.0000);color:#000;"><u>L</u>evel</div>
<div class="t" style="left:117.00px;top:107px;font-size:12px;transform:scaleX(0.9067);color:#000;">Web Occupational Grouping</div>
<div class="t" style="left:408.10px;top:107px;font-size:12px;transform:scaleX(0.8977);color:#000;">L<u>e</u>vel definition...</div>
<div class="t" style="left:17.11px;top:163px;font-size:12px;transform:scaleX(0.8929);color:#000;"><u>U</u>ser Code</div>
<div class="t" style="left:17.07px;top:189px;font-size:12px;transform:scaleX(0.9310);color:#000;"><u>D</u>escription</div>
<div class="t" style="left:18.00px;top:215px;font-size:12px;transform:scaleX(0.9011);color:#000;"><u>A</u>ccounting Code</div>
<div class="t" style="left:118.11px;top:162px;font-size:12px;transform:scaleX(0.8919);color:#fff;">Dietary</div>
<div class="t" style="left:118.11px;top:188px;font-size:12px;transform:scaleX(0.8919);color:#000;">Dietary</div>
<div class="t" style="left:118.11px;top:214px;font-size:12px;transform:scaleX(0.8919);color:#808080;">Dietary</div>
<div class="t dis" style="left:262.00px;top:215px;font-size:12px;transform:scaleX(0.9688);">Active</div>
<div class="t" style="left:395.11px;top:161px;font-size:12px;transform:scaleX(0.8926);color:#000;"><u>U</u>ser Defined Folders...</div>
<div class="t" style="left:419.09px;top:215px;font-size:12px;transform:scaleX(0.9104);color:#000;"><u>N</u>otification...</div>
<div class="t" style="left:12.10px;top:243px;font-size:12px;transform:scaleX(0.8966);color:#000;">Description</div>
<div class="t" style="left:258.00px;top:243px;font-size:12px;transform:scaleX(0.8929);color:#000;">Code</div>
<div class="t" style="left:322.00px;top:243px;font-size:12px;transform:scaleX(0.9535);color:#000;">Account</div>
<div class="t" style="left:447.00px;top:243px;font-size:12px;transform:scaleX(0.9375);color:#000;">Active</div>
<div class="t" style="left:12.00px;top:261px;font-size:12px;transform:scaleX(0.8667);color:#000;">Administration</div>
<div class="t" style="left:258.00px;top:261px;font-size:12px;transform:scaleX(0.8788);color:#000;">Admin</div>
<div class="t" style="left:11.11px;top:278px;font-size:12px;transform:scaleX(0.8919);color:#fff;">Dietary</div>
<div class="t" style="left:257.11px;top:278px;font-size:12px;transform:scaleX(0.8919);color:#fff;">Dietary</div>
<div class="t" style="left:321.11px;top:278px;font-size:12px;transform:scaleX(0.8919);color:#fff;">Dietary</div>
<div class="t" style="left:11.10px;top:295px;font-size:12px;transform:scaleX(0.9024);color:#000;">Director</div>
<div class="t" style="left:257.10px;top:295px;font-size:12px;transform:scaleX(0.9024);color:#000;">Director</div>
<div class="t" style="left:11.09px;top:312px;font-size:12px;transform:scaleX(0.9091);color:#000;">Finance and Accounting Services</div>
<div class="t" style="left:257.10px;top:312px;font-size:12px;transform:scaleX(0.9024);color:#000;">Finance</div>
<div class="t" style="left:11.05px;top:329px;font-size:12px;transform:scaleX(0.9545);color:#000;">LPN</div>
<div class="t" style="left:257.05px;top:329px;font-size:12px;transform:scaleX(0.9545);color:#000;">LPN</div>
<div class="t" style="left:11.07px;top:346px;font-size:12px;transform:scaleX(0.9348);color:#000;">Manager</div>
<div class="t" style="left:257.09px;top:346px;font-size:12px;transform:scaleX(0.9130);color:#000;">Manager</div>
<div class="t" style="left:11.10px;top:363px;font-size:12px;transform:scaleX(0.9000);color:#000;">Nursing</div>
<div class="t" style="left:257.10px;top:363px;font-size:12px;transform:scaleX(0.9000);color:#000;">Nursing</div>
<div class="t" style="left:321.10px;top:363px;font-size:12px;transform:scaleX(0.9000);color:#000;">Nursing</div>
<div class="t" style="left:11.09px;top:380px;font-size:12px;transform:scaleX(0.9057);color:#000;">Pharmacy</div>
<div class="t" style="left:257.11px;top:380px;font-size:12px;transform:scaleX(0.8868);color:#000;">Pharmacy</div>
<div class="t" style="left:321.09px;top:380px;font-size:12px;transform:scaleX(0.9057);color:#000;">Pharmacy</div>
<div class="t" style="left:16.19px;top:90px;font-size:12px;transform:scaleX(0.8077);color:#000;">Filter</div>
<div class="t" style="left:17.00px;top:132px;font-size:12px;transform:scaleX(0.8730);color:#000;">Org. Details</div>
</body></html>
